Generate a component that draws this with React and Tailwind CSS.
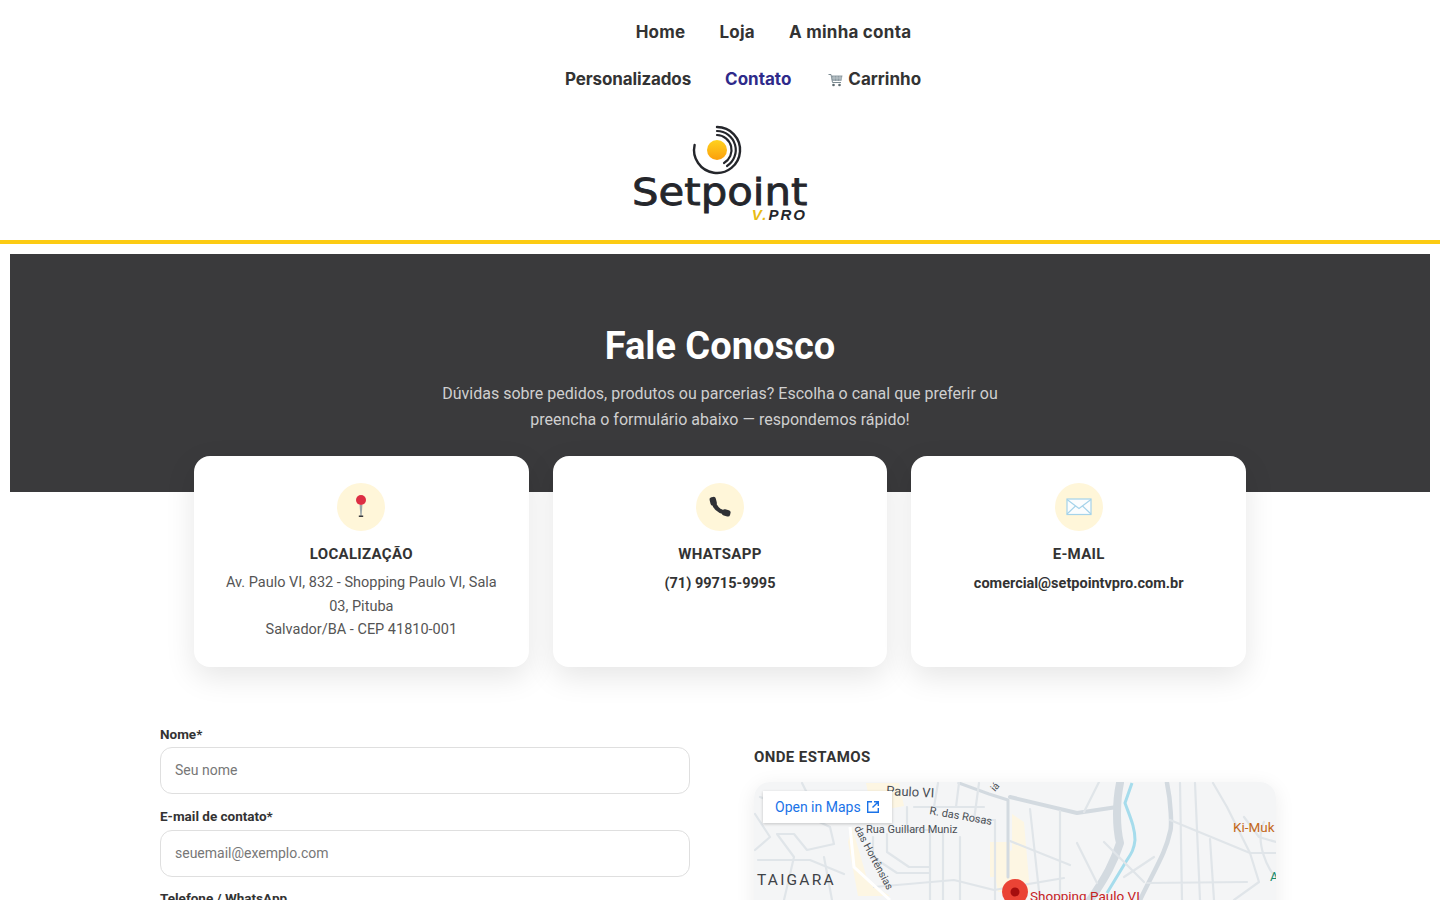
import React from 'react';

const roboto = "font-['Roboto',sans-serif]";

function Logo() {
  return (
    <div className="flex w-[176px] flex-col items-center">
      <svg width="52" height="52" viewBox="0 0 52 52" fill="none" className="ml-[-6px]">
        <defs>
          <linearGradient id="sun" x1="0" y1="0" x2="0" y2="1">
            <stop offset="0" stopColor="#ffd21f" />
            <stop offset="1" stopColor="#fb9f0c" />
          </linearGradient>
        </defs>
        <circle cx="26" cy="26" r="10" fill="url(#sun)" />
        <g stroke="#24262b" strokeLinecap="round" fill="none">
          <path d="M26 3 A23 23 0 1 1 3.6 21" strokeWidth="2.4" />
          <path d="M26 7 A19 19 0 0 1 36 42" strokeWidth="2.2" />
          <path d="M26 11 A15 15 0 0 1 33 39" strokeWidth="2.2" />
        </g>
      </svg>
      <div className="mt-[-6px] scale-x-[1.1] font-['DejaVu_Sans',sans-serif] text-[38px] leading-[44px] text-[#24262b] [-webkit-text-stroke:0.8px_#24262b]">Setpoint</div>
      <div className="mt-[-6px] self-end pr-[1px] font-['Liberation_Sans',sans-serif] text-[15px] leading-[14px] font-bold tracking-[2px] italic">
        <span className="text-[#e8bb14]">V.</span>
        <span className="text-[#24262b]">PRO</span>
      </div>
    </div>
  );
}

function CartIcon() {
  return (
    <svg width="15" height="14" viewBox="0 0 15 14" fill="none">
      <path d="M0.5 1.5H3L4.5 9.5H13" stroke="#7b8a91" strokeWidth="1" />
      <path d="M3.2 2.5H14.5L13.4 8H4.2Z" fill="#8d9ba2" />
      <path d="M6 2.5V8M9 2.5V8M12 2.5V8M3.6 5H14" stroke="#d5dcdf" strokeWidth="0.6" />
      <circle cx="5.5" cy="12" r="1.3" fill="#5c6a70" />
      <circle cx="11.5" cy="12" r="1.3" fill="#5c6a70" />
    </svg>
  );
}

function PinIcon() {
  return (
    <svg width="14" height="26" viewBox="0 0 14 26">
      <path d="M5.6 11H8.4L7.6 22H6.4Z" fill="#9aa5a8" />
      <rect x="4.8" y="21.5" width="4.4" height="1.5" fill="#3a3a3c" />
      <circle cx="7" cy="6" r="5" fill="#dd2e44" />
    </svg>
  );
}

function PhoneIcon() {
  return (
    <svg width="22" height="22" viewBox="0 0 22 22" fill="none">
      <path d="M4.5 6C5.5 11 10 15.5 15.5 16.5" stroke="#2f3136" strokeWidth="4.2" strokeLinecap="round" />
      <rect x="1" y="1" width="6.4" height="8.4" rx="2.4" fill="#2f3136" transform="rotate(-14 4.2 5.2)" />
      <rect x="13" y="13.6" width="8.4" height="6.4" rx="2.4" fill="#2f3136" transform="rotate(14 17 17)" />
    </svg>
  );
}

function MailIcon() {
  return (
    <svg width="26" height="20" viewBox="0 0 26 20" fill="none">
      <rect x="1" y="2" width="24" height="15.5" fill="#fbfdfe" stroke="#a5d3ea" strokeWidth="1.2" />
      <path d="M1 2.5L13 11.5L25 2.5M1 17L9.5 9M25 17L16.5 9" stroke="#a5d3ea" strokeWidth="1.2" />
    </svg>
  );
}

function InfoCard({ icon, title, children }) {
  return (
    <div className="flex h-[211px] flex-col items-center rounded-2xl bg-white px-7 pt-[27px] text-center shadow-[0_10px_30px_rgba(0,0,0,0.1)]">
      <div className="flex h-12 w-12 items-center justify-center rounded-full bg-[#fff6d9]">{icon}</div>
      <h3 className="mt-[13px] text-[15px] leading-[20px] font-bold tracking-[0.3px] text-[#333333]">{title}</h3>
      {children}
    </div>
  );
}

function Field({ label, placeholder, type = 'text', labelGap = 'mb-[5px]', bottom = 'mb-[14px]' }) {
  return (
    <div className={bottom}>
      <label className={`${labelGap} block text-[13.5px] leading-[16px] font-bold text-[#333333]`}>{label}</label>
      <input
        type={type}
        placeholder={placeholder}
        className="h-[47px] w-full rounded-xl border border-[#dfdfdf] bg-white px-[14px] pb-[2px] text-sm text-[#333333] outline-none placeholder:text-[#777777]"
      />
    </div>
  );
}

function MapDrawing() {
  return (
    <svg width="522" height="400" viewBox="0 0 522 400" className="block" style={{ fontFamily: 'Roboto, sans-serif' }}>
      <rect width="522" height="400" fill="#f4f5f6" />
      {/* areas */}
      <g fill="#fdf6e3">
        <path d="M112 1H145L150 24L118 30Z" />
        <path d="M236 60H256V95H236Z" />
        <path d="M258 32L270 40L276 110H244L238 78L258 68Z" />
        <path d="M98 45L114 100L136 114H104L94 60Z" />
      </g>
      {/* highways */}
      <g fill="none" stroke="#d3dae0" strokeLinecap="round" strokeLinejoin="round">
        <path d="M366 1C362 20 362 45 366 61C360 80 352 95 336 118" strokeWidth="8" />
        <path d="M413 1C417 20 418 45 416 50C412 70 402 85 386 118" strokeWidth="4.5" />
        <path d="M256 15L323 31L363 25" strokeWidth="4" />
        <path d="M205 1L235 12L254 18V95" strokeWidth="3" />
      </g>
      {/* river */}
      <path d="M378 1L371 21C376 35 381 45 381 58C380 68 377 72 373 78L353 111" fill="none" stroke="#a6dcec" strokeWidth="3" />
      {/* streets */}
      <g fill="none" stroke="#e0e5e9" strokeWidth="2.2" strokeLinecap="round" strokeLinejoin="round">
        <path d="M426 1L428 118M441 1L446 118M416 38L496 71H523M393 101L493 100" />
        <path d="M459 1L473 25L496 71M456 57L460 118M323 61L343 101M276 27L286 118" />
        <path d="M306 29V118M256 59L316 83M350 60L390 100M345 0L330 30M370 95L400 75" />
        <path d="M119 55V75L143 91H176M133 52V70L155 85H176M153 25V48H176V118M189 48V118M206 55V118M241 38V118" />
        <path d="M225 1L220 38L241 38M184 1L180 25M205 1L202 25M160 25H230" />
        <path d="M6 15L40 28L76 45L80 62L53 68L40 52H23L40 75L30 118M4 78H56L90 92" />
        <path d="M1 32L16 55L1 68M48 1L60 25L90 25L96 40M70 75L78 118" />
        <path d="M490 35L505 55L522 60M496 71L505 100L480 118M510 40C500 60 515 90 522 95" />
        <path d="M120 105L200 98L240 108L310 96" />
      </g>
      <path d="M96 45L100 85L136 118" fill="none" stroke="#fff" strokeWidth="3" />
      {/* labels */}
      <g fill="#4a4f55">
        <text x="132" y="13" fontSize="13" transform="rotate(3 132 13)">Paulo VI</text>
        <text x="175" y="32" fontSize="11" transform="rotate(10 175 32)">R. das Rosas</text>
        <text x="112" y="51" fontSize="11">Rua Guillard Muniz</text>
        <text x="100" y="46" fontSize="10.5" transform="rotate(62 100 46)">das Hortênsias</text>
        <text x="241" y="10" fontSize="10" transform="rotate(-50 241 10)">iá</text>
        <text x="3" y="103" fontSize="15.5" letterSpacing="2.2" fill="#3e4247">TAIGARA</text>
      </g>
      <text x="479" y="50" fontSize="13.5" fill="#c5691a">Ki-Muk</text>
      <text x="516" y="99" fontSize="13" fill="#1a8a6a">A</text>
      <text x="276" y="119" fontSize="13.5" fill="#c5221f">Shopping Paulo VI</text>
      {/* pin */}
      <circle cx="261" cy="110" r="13" fill="#ea4335" />
      <circle cx="261" cy="110" r="4.5" fill="#a50e0e" />
    </svg>
  );
}

export default function App() {
  return (
    <div className={`h-[900px] overflow-hidden bg-white ${roboto}`}>
      {/* Header */}
      <header className="border-b-4 border-[#fccb13] pt-[9px]">
        <nav className="font-['Inter',sans-serif] text-[17px] font-bold text-[#333333]">
          <div className="flex h-[47px] items-center justify-center gap-[34px] pl-[107px] tracking-[0.25px]">
            <a>Home</a>
            <a>Loja</a>
            <a>A minha conta</a>
          </div>
          <div className="flex h-[47px] items-center justify-center gap-[34px] pl-[46px]">
            <a className="tracking-[-0.12px]">Personalizados</a>
            <a className="text-[#2e2a8a]">Contato</a>
            <a className="ml-[3px] flex items-center gap-[5px]">
              <CartIcon />
              Carrinho
            </a>
          </div>
        </nav>
        <div className="flex h-[137px] justify-center pt-[21px]">
          <Logo />
        </div>
      </header>

      {/* Hero */}
      <section className="mx-[10px] mt-[10px] h-[238px] bg-[#3a3a3c] pt-[68px] text-center">
        <h1 className="text-[38px] leading-[48px] font-bold text-white">Fale Conosco</h1>
        <p className="mx-auto mt-[11px] w-[600px] text-base leading-[26px] text-[#cfcfcf]">
          Dúvidas sobre pedidos, produtos ou parcerias? Escolha o canal que preferir ou preencha o formulário abaixo — respondemos rápido!
        </p>
      </section>

      {/* Cards */}
      <div className="mx-auto -mt-9 grid w-[1052px] grid-cols-3 gap-6">
        <InfoCard icon={<PinIcon />} title="LOCALIZAÇÃO">
          <p className="mt-[7px] text-[14.5px] leading-[23.5px] text-[#555555]">
            Av. Paulo VI, 832 - Shopping Paulo VI, Sala 03, Pituba
            <br />
            Salvador/BA - CEP 41810-001
          </p>
        </InfoCard>
        <InfoCard icon={<PhoneIcon />} title="WHATSAPP">
          <p className="mt-[8px] text-[14.5px] leading-[23.5px] font-bold text-[#333333]">(71) 99715-9995</p>
        </InfoCard>
        <InfoCard icon={<MailIcon />} title="E-MAIL">
          <p className="mt-[8px] text-[14.5px] leading-[23.5px] font-bold text-[#333333]">comercial@setpointvpro.com.br</p>
        </InfoCard>
      </div>

      {/* Form + map */}
      <div className="mx-auto mt-[59px] grid w-[1120px] grid-cols-[530px_522px] gap-16">
        <form>
          <Field label="Nome*" placeholder="Seu nome" />
          <Field label="E-mail de contato*" placeholder="seuemail@exemplo.com" type="email" labelGap="mb-[6px]" bottom="mb-[13px]" />
          <Field label="Telefone / WhatsApp" placeholder="(71) 99999-9999" />
        </form>
        <div className="pt-[21px]">
          <h2 className="text-[15px] leading-[20px] font-bold tracking-[0.4px] text-[#333333]">ONDE ESTAMOS</h2>
          <div className="relative mt-[15px] overflow-hidden rounded-2xl shadow-[0_4px_20px_rgba(0,0,0,0.08)]">
            <MapDrawing />
            <a className="absolute top-[9px] left-[9px] flex h-[32px] items-center gap-[5px] bg-white px-3 text-sm text-[#1a73e8] shadow-[0_1px_3px_rgba(0,0,0,0.2)]">
              Open in Maps
              <svg width="14" height="14" viewBox="0 0 14 14" fill="none" stroke="#1a73e8" strokeWidth="1.4">
                <path d="M6 1.7H1.7V12.3H12.3V8M8 1.7H12.3V6M12.3 1.7L6.5 7.5" />
              </svg>
            </a>
          </div>
        </div>
      </div>
    </div>
  );
}
